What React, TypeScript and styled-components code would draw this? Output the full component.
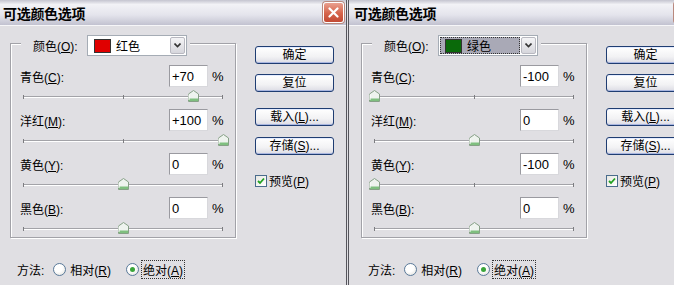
import styled, { createGlobalStyle } from 'styled-components'

// 基本颜色
const bg = '#e0dfe3'
const uiFont = `Tahoma, "Liberation Sans", "Noto Sans CJK SC", sans-serif`

const GlobalStyle = createGlobalStyle`
  html, body {
    margin: 0;
    padding: 0;
    background: ${bg};
  }
  body {
    font-family: ${uiFont};
    font-size: 12px;
    color: #000;
  }
`

const Screen = styled.div`
  display: flex;
  width: 674px;
  height: 285px;
  overflow: hidden;
  background: ${bg};
`

const Window = styled.div<{ $first?: boolean }>`
  flex: 0 0 348px;
  display: flex;
  flex-direction: column;
  margin-left: ${({ $first }) => ($first ? '-2px' : '0')};
  border-left: ${({ $first }) => ($first ? 'none' : '3px double #55555c')};
  background: ${bg};
`

const TitleBar = styled.div`
  height: 25px;
  display: flex;
  align-items: center;
  justify-content: space-between;
  padding: 0 2px 0 5px;
  background: linear-gradient(180deg, #c4c4cf 0%, #f2f2f6 18%, #e4e4ec 60%, #c2c2d0 100%);
  border-bottom: 1px solid #f6f6f8;
`

const Title = styled.span`
  font-family: "Noto Sans CJK SC", sans-serif;
  font-weight: bold;
  font-size: 14px;
  letter-spacing: -0.3px;
`

const CloseBtn = styled.div`
  width: 19px;
  height: 19px;
  border: 1px solid #fff;
  border-radius: 3px;
  background: linear-gradient(180deg, #e9a08f 0%, #d5634a 55%, #c24a34 100%);
  box-shadow: 0 0 0 1px #b9897e;
  display: flex;
  align-items: center;
  justify-content: center;
`

const Body = styled.div`
  display: flex;
`

const LeftCol = styled.div`
  display: flex;
  flex-direction: column;
  padding-left: 12px;
`

const Group = styled.div`
  margin-top: 17px;
  width: 226px;
  box-sizing: border-box;
  border: 1px solid #a2a2a8;
  box-shadow: inset 1px 1px 0 #fff, 1px 1px 0 #fff;
  display: flex;
  flex-direction: column;
  gap: 9px;
  padding: 0 12px 5px 9px;
`

const Legend = styled.div`
  align-self: flex-start;
  display: flex;
  align-items: center;
  margin: -9px 0 0 1px;
  padding: 0 3px 0 12px;
  background: ${bg};
`

const LegendLabel = styled.span`
  width: 54px;
`

const Select = styled.div`
  width: 100px;
  height: 21px;
  box-sizing: border-box;
  border: 1px solid #a5acb5;
  background: #fff;
  display: flex;
  align-items: stretch;
  padding: 1px;
`

const SelectValue = styled.div<{ $focused?: boolean }>`
  flex: 1;
  display: flex;
  align-items: center;
  gap: 5px;
  padding-left: 5px;
  background: ${({ $focused }) => ($focused ? '#a9a9b6' : 'transparent')};
  outline: ${({ $focused }) => ($focused ? '1px dotted #333' : 'none')};
  outline-offset: -1px;
`

const Swatch = styled.span<{ $color: string }>`
  width: 15px;
  height: 12px;
  background: ${({ $color }) => $color};
  border: 1px solid #333;
`

const SelectButton = styled.div`
  width: 15px;
  margin-left: 1px;
  box-sizing: border-box;
  border: 1px solid #b8b8c0;
  border-radius: 2px;
  background: linear-gradient(180deg, #f4f4f6, #d6d6dc);
  display: flex;
  align-items: center;
  justify-content: center;
`

const Control = styled.div`
  display: flex;
  flex-direction: column;
`

const InputRow = styled.div`
  height: 22px;
  display: flex;
  align-items: center;
`

const Label = styled.span`
  flex: 1;
`

const Mn = styled.span`
  text-decoration: underline;
`

const NumBox = styled.div`
  width: 39px;
  height: 22px;
  box-sizing: border-box;
  border: 1px solid #9a9aa0;
  border-right-color: #d8d8dc;
  border-bottom-color: #d8d8dc;
  background: #fff;
  font-family: "Liberation Sans", sans-serif;
  font-size: 13px;
  display: flex;
  align-items: center;
  padding-left: 2px;
`

const Percent = styled.span`
  width: 11px;
  margin-left: 4px;
  font-family: "Liberation Sans", sans-serif;
  font-size: 13px;
`

const Slider = styled.div`
  position: relative;
  width: 200px;
  height: 13px;
  margin-left: 3px;
`

const Track = styled.div`
  position: absolute;
  left: 0;
  right: 0;
  top: 9px;
  height: 1px;
  background: #a3a3a8;
  border-bottom: 1px solid #fff;
`

const Tick = styled.div<{ $at: string }>`
  position: absolute;
  left: ${({ $at }) => $at};
  top: 8px;
  width: 1px;
  height: 4px;
  background: #7c7c80;
`

const Thumb = styled.svg`
  position: absolute;
  top: 3px;
`

const MethodRow = styled.div`
  margin: 23px 0 0 7px;
  height: 16px;
  display: flex;
  align-items: center;
`

const MethodLabel = styled.span`
  margin-right: 9px;
`

const Radio = styled.span<{ $on?: boolean }>`
  width: 13px;
  height: 13px;
  box-sizing: border-box;
  border-radius: 50%;
  border: 1px solid #5a7a9a;
  background: radial-gradient(circle at 40% 35%, #fff 40%, #dcdcd6 100%);
  display: flex;
  align-items: center;
  justify-content: center;
  margin-right: 3px;

  &::after {
    content: '';
    display: ${({ $on }) => ($on ? 'block' : 'none')};
    width: 5px;
    height: 5px;
    border-radius: 50%;
    background: #3aa53a;
  }
`

const RadioText = styled.span<{ $focused?: boolean }>`
  margin-right: 14px;
  padding: 0 1px;
  outline: ${({ $focused }) => ($focused ? '1px dotted #333' : 'none')};
`

const RightCol = styled.div`
  margin-left: 19px;
  padding-top: 20px;
  display: flex;
  flex-direction: column;
`

const Button = styled.div<{ $mt?: number }>`
  width: 79px;
  height: 18px;
  box-sizing: border-box;
  margin-top: ${({ $mt }) => $mt ?? 0}px;
  border: 1px solid #1f3d72;
  border-radius: 3px;
  background: linear-gradient(180deg, #ffffff 0%, #f2f2f4 60%, #dcdce4 100%);
  box-shadow: inset 0 -1px 0 #a9b6e0, inset 0 1px 0 #e4ecff;
  display: flex;
  align-items: center;
  justify-content: center;
  line-height: 1;
`

const CheckRow = styled.div`
  margin-top: 17px;
  display: flex;
  align-items: center;
`

const CheckBox = styled.span`
  width: 12px;
  height: 12px;
  box-sizing: border-box;
  border: 1px solid #4a6c8c;
  background: linear-gradient(135deg, #e8e8e2, #fff);
  display: flex;
  align-items: center;
  justify-content: center;
  margin-right: 2px;
`

type Channel = { name: string; key: string; value: number }

type DialogProps = {
  first?: boolean
  colorName: string
  swatch: string
  focusedSelect?: boolean
  channels: Channel[]
}

function fmt(v: number) {
  return v > 0 ? `+${v}` : `${v}`
}

function SliderBar({ value }: { value: number }) {
  return (
    <Slider>
      <Track />
      <Tick $at="0px" />
      <Tick $at="100px" />
      <Tick $at="199px" />
      <Thumb width="11" height="12" viewBox="0 0 11 12" style={{ left: value + 100 - 5.5 }}>
        <path d="M0.5 4 L5.5 0.5 L10.5 4 V11.5 H0.5 Z" fill="#eef3ee" stroke="#86a086" />
        <rect x="1" y="8.5" width="9" height="2.5" fill="#7fbf7f" />
        <line x1="1" y1="4.5" x2="1" y2="10" stroke="#fff" />
      </Thumb>
    </Slider>
  )
}

function Dialog({ first, colorName, swatch, focusedSelect, channels }: DialogProps) {
  return (
    <Window $first={first}>
      <TitleBar>
        <Title>可选颜色选项</Title>
        <CloseBtn>
          <svg width="11" height="11" viewBox="0 0 11 11">
            <path d="M1.5 1.5 L9.5 9.5 M9.5 1.5 L1.5 9.5" stroke="#fff" strokeWidth="2.2" strokeLinecap="round" />
          </svg>
        </CloseBtn>
      </TitleBar>
      <Body>
        <LeftCol>
          <Group>
            <Legend>
              <LegendLabel>颜色(<Mn>O</Mn>):</LegendLabel>
              <Select>
                <SelectValue $focused={focusedSelect}>
                  <Swatch $color={swatch} />
                  <span>{colorName}</span>
                </SelectValue>
                <SelectButton>
                  <svg width="7" height="5" viewBox="0 0 7 5">
                    <path d="M0.5 0.5 L3.5 3.5 L6.5 0.5" stroke="#333" strokeWidth="1.6" fill="none" />
                  </svg>
                </SelectButton>
              </Select>
            </Legend>
            {channels.map(c => (
              <Control key={c.key}>
                <InputRow>
                  <Label>
                    {c.name}(<Mn>{c.key}</Mn>):
                  </Label>
                  <NumBox>{fmt(c.value)}</NumBox>
                  <Percent>%</Percent>
                </InputRow>
                <SliderBar value={c.value} />
              </Control>
            ))}
          </Group>
          <MethodRow>
            <MethodLabel>方法:</MethodLabel>
            <Radio />
            <RadioText>相对(<Mn>R</Mn>)</RadioText>
            <Radio $on />
            <RadioText $focused>绝对(<Mn>A</Mn>)</RadioText>
          </MethodRow>
        </LeftCol>
        <RightCol>
          <Button>确定</Button>
          <Button $mt={10}>复位</Button>
          <Button $mt={16}>载入(<Mn>L</Mn>)...</Button>
          <Button $mt={11}>存储(<Mn>S</Mn>)...</Button>
          <CheckRow>
            <CheckBox>
              <svg width="8" height="8" viewBox="0 0 8 8">
                <path d="M1 4 L3 6 L7 1.5" stroke="#21a121" strokeWidth="1.8" fill="none" />
              </svg>
            </CheckBox>
            <span>预览(<Mn>P</Mn>)</span>
          </CheckRow>
        </RightCol>
      </Body>
    </Window>
  )
}

export default function App() {
  return (
    <>
      <GlobalStyle />
      <Screen>
        <Dialog
          first
          colorName="红色"
          swatch="#e00000"
          channels={[
            { name: '青色', key: 'C', value: 70 },
            { name: '洋红', key: 'M', value: 100 },
            { name: '黄色', key: 'Y', value: 0 },
            { name: '黑色', key: 'B', value: 0 },
          ]}
        />
        <Dialog
          colorName="绿色"
          swatch="#0a6a0a"
          focusedSelect
          channels={[
            { name: '青色', key: 'C', value: -100 },
            { name: '洋红', key: 'M', value: 0 },
            { name: '黄色', key: 'Y', value: -100 },
            { name: '黑色', key: 'B', value: 0 },
          ]}
        />
      </Screen>
    </>
  )
}
